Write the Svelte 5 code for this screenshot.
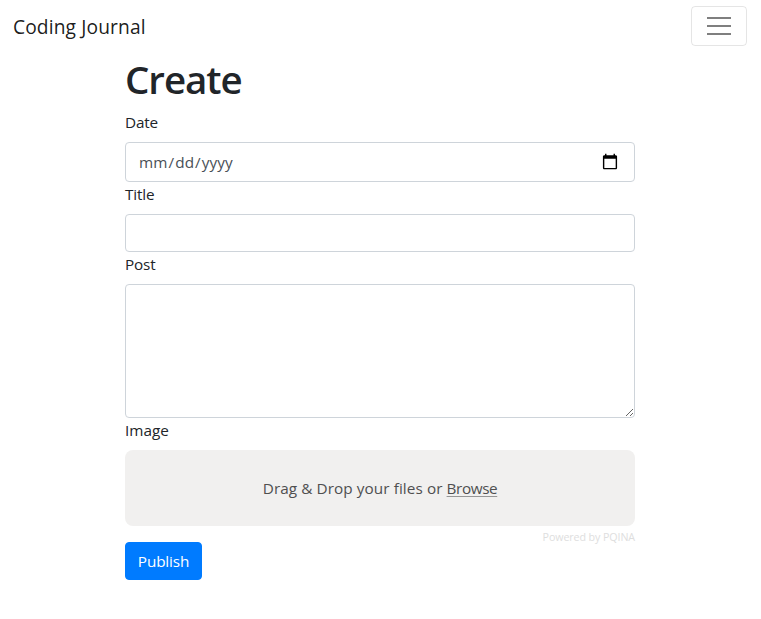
<script>
  let date = $state('');
  let title = $state('');
  let post = $state('');
</script>

<nav>
  <a class="brand" href="#home">Coding Journal</a>
  <button class="toggler" type="button" aria-label="Toggle navigation">
    <svg viewBox="0 0 30 30" width="30" height="30">
      <path d="M3 7h24M3 15h24M3 23h24" stroke="rgba(0,0,0,.5)" stroke-width="2" />
    </svg>
  </button>
</nav>

<main>
  <h1>Create</h1>
  <form>
    <label for="date">Date</label>
    <input id="date" class="control date" type="date" bind:value={date} />
    <label for="title">Title</label>
    <input id="title" class="control" type="text" bind:value={title} />
    <label for="post">Post</label>
    <textarea id="post" class="control" bind:value={post}></textarea>
    <label class="image-label" for="image">Image</label>
    <div class="drop" id="image"><span>Drag &amp; Drop your files or <u>Browse</u></span></div>
    <div class="credit"><span>Powered by PQINA</span></div>
    <button class="publish" type="button"><span>Publish</span></button>
  </form>
</main>

<style>
  :global(body) {
    margin: 0;
    background: #fff;
    color: #212529;
    font: 400 15.3px/24px "Open Sans", "Noto Sans", sans-serif;
  }
  * { box-sizing: border-box; }
  nav {
    height: 54px;
    padding: 6px 14px 8px 13px;
    display: flex;
    align-items: flex-start;
    justify-content: space-between;
  }
  .brand {
    color: rgba(0, 0, 0, .9);
    text-decoration: none;
    font-size: 19.2px;
    line-height: 30px;
    letter-spacing: 0.12px;
    padding-top: 6px;
  }
  .toggler {
    width: 56px;
    height: 40px;
    padding: 0;
    display: flex;
    align-items: center;
    justify-content: center;
    background: transparent;
    border: 1px solid rgba(0, 0, 0, .1);
    border-radius: 4px;
  }
  .toggler path { fill: none; }
  main { width: 510px; margin: 0 auto; position: relative; left: -0.5px; }
  h1 {
    margin: 0 0 8px;
    padding-top: 1px;
    height: 48px;
    font-size: 38.5px;
    line-height: 48px;
    font-weight: 600;
    letter-spacing: -1.05px;
  }
  form { display: flex; flex-direction: column; align-items: flex-start; }
  label { display: block; margin-bottom: 8px; letter-spacing: -0.15px; }
  .image-label { letter-spacing: 0; }
  .control {
    display: block;
    width: 100%;
    height: 38px;
    margin: 0;
    padding: 6px 12px;
    font: inherit;
    color: #495057;
    background: #fff;
    border: 1px solid #ced4da;
    border-radius: 4px;
    outline: 0;
  }
  .date { height: 40px; padding-right: 15px; letter-spacing: 0.08px; }
  .date::-webkit-calendar-picker-indicator { width: 18px; height: 18px; padding: 0; }
  textarea.control { height: 134px; resize: vertical; overflow: auto; }
  .drop {
    width: 100%;
    height: 76px;
    display: flex;
    align-items: center;
    justify-content: center;
    background: #f1f0ef;
    border-radius: 8px;
    color: #4f4f4f;
    letter-spacing: 0.08px;
    white-space: nowrap;
  }
  u {
    letter-spacing: -0.4px;
    text-decoration-color: #969696;
    text-decoration-thickness: 1px;
    text-underline-offset: 2px;
  }
  .credit {
    width: 100%;
    height: 16px;
    text-align: right;
    font-size: 10.7px;
    line-height: 22px;
    color: #dedede;
    letter-spacing: -0.1px;
  }
  .publish {
    width: 77px;
    height: 38px;
    padding: 0;
    font: inherit;
    letter-spacing: -0.15px;
    color: #fff;
    background: #007bff;
    border: 1px solid #007bff;
    border-radius: 4px;
  }
</style>
